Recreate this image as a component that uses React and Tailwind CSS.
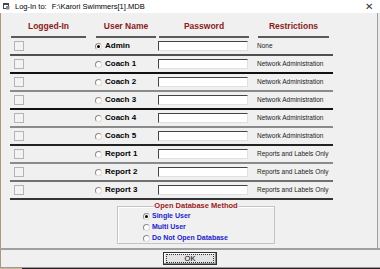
import React from "react";

const users = [
  { name: "Admin", restriction: "None", line: "bg-[#505050]", checked: true },
  { name: "Coach 1", restriction: "Network Administration", line: "bg-[#111111]" },
  { name: "Coach 2", restriction: "Network Administration", line: "bg-[#8a8a8a]" },
  { name: "Coach 3", restriction: "Network Administration", line: "bg-[#111111]" },
  { name: "Coach 4", restriction: "Network Administration", line: "bg-[#8a8a8a]" },
  { name: "Coach 5", restriction: "Network Administration", line: "bg-[#222222]" },
  { name: "Report 1", restriction: "Reports and Labels Only", line: "bg-[#8a8a8a]" },
  { name: "Report 2", restriction: "Reports and Labels Only", line: "bg-[#707070]" },
  { name: "Report 3", restriction: "Reports and Labels Only", line: "bg-[#333333]" },
];

const dbOptions = [
  { label: "Single User", checked: true },
  { label: "Multi User" },
  { label: "Do Not Open Database" },
];

function Radio({ checked }) {
  return (
    <span className="flex h-[7px] w-[7px] shrink-0 items-center justify-center rounded-full border border-[#8c8c8c] border-b-[#dcdcdc] border-r-[#dcdcdc] bg-white">
      {checked && <span className="h-[3px] w-[3px] rounded-full bg-black" />}
    </span>
  );
}

function Header({ label, width, ml }) {
  return (
    <div className={`flex flex-col items-center ${width} ${ml}`}>
      <span className="h-[18px] leading-[18px] text-[8.5px] font-bold text-[#8b1a1a]">
        {label}
      </span>
      <div className="mt-[1px] h-[2px] w-full bg-[#5a5a5a]" />
    </div>
  );
}

function UserRow({ user }) {
  return (
    <div className="flex flex-col">
      <div className="grid h-[16px] grid-cols-[75px_73px_99px_1fr] items-center">
        <div className="pl-[4px]">
          <div className="h-[10px] w-[10px] border border-[#b4b4b4] bg-[#f3f3f3]" />
        </div>
        <div className="flex items-center gap-[3px] pl-[10px]">
          <Radio checked={user.checked} />
          <span className="text-[8px] font-bold text-black">{user.name}</span>
        </div>
        <div>
          <div className="h-[10px] w-[90px] border border-[#444444] border-b-[#e0e0e0] border-r-[#e0e0e0] bg-white" />
        </div>
        <div className="text-[6.5px] text-[#222222]">{user.restriction}</div>
      </div>
      <div className={`h-[2px] ${user.line}`} />
    </div>
  );
}

export default function App() {
  return (
    <div className="flex h-[269px] w-[380px] flex-col overflow-hidden bg-[#e9e9e9] font-['Liberation_Sans',Arial,sans-serif]">
      {/* title bar */}
      <div className="flex h-[13px] shrink-0 items-center bg-white pl-[3px] pr-[7px]">
        <svg width="7" height="7" viewBox="0 0 7 7" className="shrink-0">
          <rect x="0.5" y="0.5" width="5" height="5" fill="#fff" stroke="#444" />
          <rect x="0.5" y="0.5" width="5" height="1.5" fill="#445" />
          <rect x="3" y="3" width="3.5" height="3.5" fill="#889" />
        </svg>
        <span className="ml-[5px] text-[7.5px] text-black">Log-In to:</span>
        <span className="ml-[5px] text-[7.5px] text-black">F:\Karori Swimmers[1].MDB</span>
        <span className="ml-auto text-[10px] leading-none text-[#333333]">✕</span>
      </div>

      {/* dialog body */}
      <div className="mr-[2px] flex flex-1 flex-col border-l border-l-[#a8987c] border-r border-r-[#a0a0a0] bg-[#f0f0f0]">
        <div className="mt-[4px] flex pl-[10px]">
          <Header label="Logged-In" width="w-[75px]" ml="" />
          <Header label="User Name" width="w-[60px]" ml="ml-[10px]" />
          <Header label="Password" width="w-[90px]" ml="ml-[3px]" />
          <Header label="Restrictions" width="w-[71px]" ml="ml-[9px]" />
        </div>

        <div className="ml-[9px] w-[323px]">
          {users.map((u) => (
            <UserRow key={u.name} user={u} />
          ))}
        </div>

        {/* group box */}
        <div className="relative ml-[116px] mt-[6px] h-[38px] w-[158px] border border-[#c4c4c4] shadow-[inset_1px_1px_0_#ffffff]">
          <span className="absolute -top-[6px] left-1/2 -translate-x-1/2 whitespace-nowrap bg-[#f0f0f0] px-[1px] text-[7.5px] font-bold leading-[10px] text-[#9b1c1c]">
            Open Database Method
          </span>
          <div className="flex flex-col gap-[3px] pl-[25px] pt-[5px]">
            {dbOptions.map((o) => (
              <div key={o.label} className="flex h-[8px] items-center gap-[2px]">
                <Radio checked={o.checked} />
                <span className="text-[7px] font-bold text-[#1c1cc8]">{o.label}</span>
              </div>
            ))}
          </div>
        </div>
        <div className="flex-1" />
      </div>

      {/* button bar */}
      <div className="h-[2px] shrink-0 bg-[#a0a0a0]" />
      <div className="flex h-[17px] shrink-0 items-center justify-center border-l border-l-[#a8987c] bg-[#f0f0f0] pr-[1px]">
        <div className="flex h-[13px] w-[54px] items-center justify-center border border-[#303030] bg-[#e4e4e4] shadow-[inset_-1px_-1px_0_#8a8a8a,inset_1px_1px_0_#ffffff]">
          <div className="flex h-[9px] w-[48px] items-center justify-center border border-dotted border-[#333333]">
            <span className="text-[7.5px] leading-none text-black">OK</span>
          </div>
        </div>
      </div>
      <div className="h-[1px] shrink-0 bg-[#9a9a9a]" />
      <div className="flex h-[1px] shrink-0">
        <div className="w-[22px] bg-[#c8b898]" />
        <div className="flex-1 bg-[#2a2222]" />
      </div>
    </div>
  );
}
